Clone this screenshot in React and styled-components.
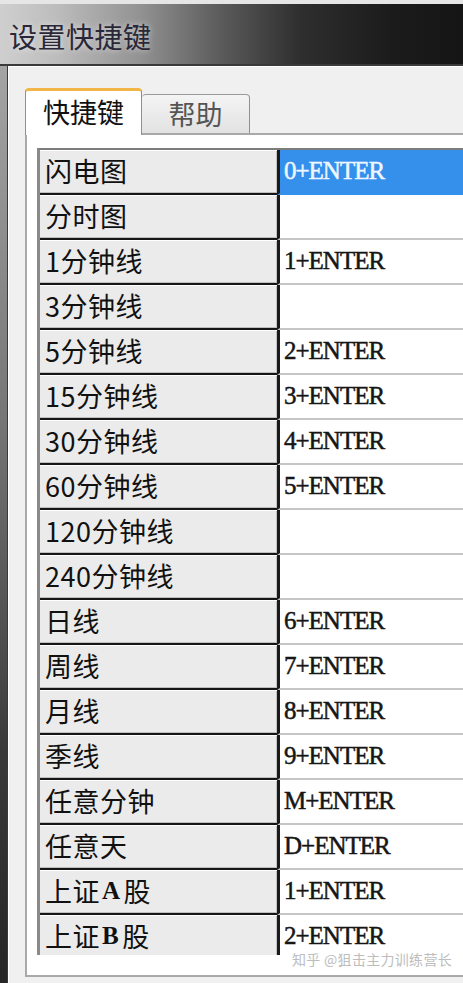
import styled, { createGlobalStyle } from 'styled-components';

const GlobalStyle = createGlobalStyle`
  html, body {
    margin: 0;
    padding: 0;
    background: #f0f0f0;
    overflow: hidden;
  }
  * {
    box-sizing: border-box;
  }
`;

const CJK = `"Noto Sans CJK SC", "Noto Sans", sans-serif`;

const Window = styled.div`
  position: relative;
  width: 463px;
  height: 983px;
  overflow: hidden;
  display: flex;
  flex-direction: column;
  font-family: ${CJK};
`;

const TitleBar = styled.div`
  height: 66px;
  flex: none;
  display: flex;
  align-items: center;
  padding: 3px 0 0 9px;
  border-top: 4px solid #e6e6e6;
  border-bottom: 2px solid #3a3a3a;
  background: linear-gradient(to right, #cfcfcf 0%, #bdbdbd 12%, #939393 30%, #5a5a5a 48%, #2e2e2e 65%, #1b1b1b 85%, #151515 100%);
`;

const Title = styled.div`
  font-size: 28px;
  line-height: 1;
  color: #2a2838;
  letter-spacing: 0.5px;
  text-shadow: 0 0 6px rgba(255, 255, 255, 0.6);
`;

const Frame = styled.div`
  flex: 1;
  display: flex;
  min-height: 0;
`;

const FrameEdge = styled.div`
  width: 8px;
  flex: none;
  background: linear-gradient(to bottom, #a4a4a4 0%, #747474 40%, #3a3a3a 75%, #262626 100%);
  border-right: 1px solid #3a3a3a;
`;

const Client = styled.div`
  flex: 1;
  display: flex;
  flex-direction: column;
  background: #f0f0f0;
  border-top: 1px solid #ffffff;
  border-left: 1px solid #ffffff;
  padding: 21px 0 6px 16px;
  margin-right: -24px;
`;

const TabStrip = styled.div`
  height: 45px;
  display: flex;
  align-items: flex-end;
`;

const Tab = styled.div`
  position: relative;
  z-index: ${(p) => (p.$active ? 1 : 0)};
  width: ${(p) => (p.$active ? '117px' : '108px')};
  height: ${(p) => (p.$active ? '47px' : '39px')};
  margin-bottom: ${(p) => (p.$active ? '-2px' : '0')};
  display: flex;
  align-items: center;
  justify-content: center;
  padding-bottom: ${(p) => (p.$active ? '4px' : '2px')};
  font-size: 27px;
  color: ${(p) => (p.$active ? '#111' : '#555')};
  background: ${(p) => (p.$active ? '#ffffff' : 'linear-gradient(#f4f4f4, #e2e2e2)')};
  border: 1px solid #909090;
  border-top: ${(p) => (p.$active ? '3px solid #f2b648' : '1px solid #9a9a9a')};
  border-bottom: none;
  border-left-width: ${(p) => (p.$active ? '1px' : '0')};
  border-radius: 4px 4px 0 0;
`;

const TabPanel = styled.div`
  flex: 1;
  background: #ffffff;
  border: 2px solid #a9a9a9;
  border-right: none;
  padding: 13px 0 20px 10px;
`;

const Grid = styled.div`
  height: 807px;
  overflow: hidden;
  border-top: 2px solid #7c7c7c;
  border-left: 3px solid #8a8a8a;
`;

const Row = styled.div`
  display: grid;
  grid-template-columns: 237px 1fr;
  height: 45px;
`;

const NameCell = styled.div`
  display: flex;
  align-items: center;
  padding: 0 0 2px 5px;
  font-size: 27px;
  letter-spacing: 0.5px;
  color: #111;
  background: #ebebeb;
  border-bottom: 2px solid #161616;
  box-shadow: inset 0 1px 0 #ffffff, inset 0 -1px 0 #bdbdbd, inset -1px 0 0 #c4c4c4;
  white-space: nowrap;
`;

const Latin = styled.span`
  font-family: "Liberation Serif", serif;
  font-weight: 700;
  font-size: 25px;
  margin: 0 3px 0 2px;
`;

const KeyCell = styled.div`
  display: flex;
  align-items: center;
  padding: 0 0 2px 4px;
  font-family: "Liberation Serif", serif;
  font-size: 25px;
  letter-spacing: -1px;
  -webkit-text-stroke: 0.5px currentColor;
  color: ${(p) => (p.$selected ? '#eef6ff' : '#161616')};
  background: ${(p) => (p.$selected ? '#3590ec' : '#ffffff')};
  border-left: 3px solid #1a1a1a;
  border-bottom: 2px solid ${(p) => (p.$selected ? '#3590ec' : '#c6c6c6')};
  white-space: nowrap;
`;

const Watermark = styled.div`
  position: absolute;
  right: 11px;
  bottom: 14px;
  font-size: 14px;
  color: #bdbdbd;
  text-shadow: 0 0 2px #fff, 0 0 2px #fff;
  letter-spacing: 0.3px;
`;

const rows = [
  ['闪电图', '0+ENTER'],
  ['分时图', ''],
  ['1分钟线', '1+ENTER'],
  ['3分钟线', ''],
  ['5分钟线', '2+ENTER'],
  ['15分钟线', '3+ENTER'],
  ['30分钟线', '4+ENTER'],
  ['60分钟线', '5+ENTER'],
  ['120分钟线', ''],
  ['240分钟线', ''],
  ['日线', '6+ENTER'],
  ['周线', '7+ENTER'],
  ['月线', '8+ENTER'],
  ['季线', '9+ENTER'],
  ['任意分钟', 'M+ENTER'],
  ['任意天', 'D+ENTER'],
  ['上证A股', '1+ENTER'],
  ['上证B股', '2+ENTER'],
];

// 上证A股 / 上证B股: the latin letter is drawn in a bold serif
const renderName = (name) => {
  const m = name.match(/^(上证)([AB])(股)$/);
  if (!m) return name;
  return (
    <>
      {m[1]}
      <Latin>{m[2]}</Latin>
      {m[3]}
    </>
  );
};

export default function App() {
  return (
    <>
      <GlobalStyle />
      <Window>
        <TitleBar>
          <Title>设置快捷键</Title>
        </TitleBar>
        <Frame>
          <FrameEdge />
          <Client>
            <TabStrip>
              <Tab $active>快捷键</Tab>
              <Tab>帮助</Tab>
            </TabStrip>
            <TabPanel>
              <Grid>
                {rows.map(([name, key], i) => (
                  <Row key={name}>
                    <NameCell>{renderName(name)}</NameCell>
                    <KeyCell $selected={i === 0}>{key}</KeyCell>
                  </Row>
                ))}
              </Grid>
            </TabPanel>
          </Client>
        </Frame>
        <Watermark>知乎 @狙击主力训练营长</Watermark>
      </Window>
    </>
  );
}
